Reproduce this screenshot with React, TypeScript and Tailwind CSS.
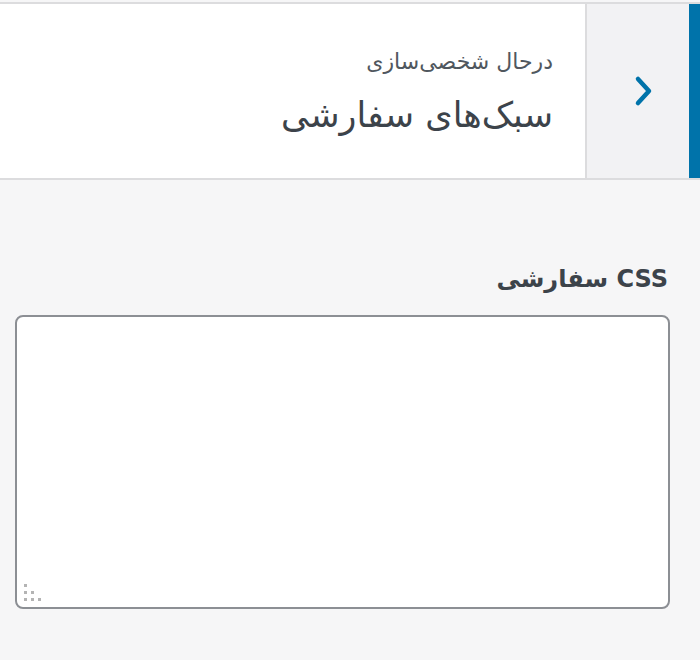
export default function App() {
  return (
    <div
      dir="rtl"
      className="w-[700px] h-[660px] bg-[#f6f6f7] pt-[2px]"
      style={{ fontFamily: '"DejaVu Sans", "Liberation Sans", sans-serif' }}
    >
      <div className="flex h-[178px] border-y-2 border-[#dcdcde] bg-white">
        <div className="w-[11px] shrink-0 bg-[#0073aa]" />
        <button className="flex w-[104px] shrink-0 items-center justify-center border-l-2 border-[#dcdcde] bg-[#f2f2f4] pl-[12px]">
          <svg width="20" height="32" viewBox="0 0 20 32" fill="none" className="text-[#0073aa]">
            <polyline points="4,4 15,16 4,28" stroke="currentColor" strokeWidth="4.5" strokeLinecap="round" strokeLinejoin="round" />
          </svg>
        </button>
        <div className="flex flex-1 flex-col pt-[44px] pr-[32px]">
          <span className="text-[22px] leading-[27px] text-[#50575e]">درحال شخصی‌سازی</span>
          <h3 className="mt-[19px] text-[35px] leading-[43px] text-[#3c434a]">سبک‌های سفارشی</h3>
        </div>
      </div>
      <div className="px-[30px] pt-[84px]">
        <label className="block pr-[2px] text-[24px] font-bold leading-[30px] text-[#3c434a]">CSS سفارشی</label>
      </div>
      <div className="pl-[15px] pr-[30px] pt-[21px]">
        <div className="relative">
          <textarea
            dir="ltr"
            className="block h-[294px] w-full resize-none rounded-[8px] border-2 border-[#8c8f94] bg-white"
          />
          <div dir="ltr" className="absolute bottom-[8px] left-[9px] flex flex-col items-start gap-[4px]">
            <div className="flex gap-[4px]">
              <span className="h-[3px] w-[3px] bg-[#b4b4b4]" />
            </div>
            <div className="flex gap-[4px]">
              <span className="h-[3px] w-[3px] bg-[#b4b4b4]" />
              <span className="h-[3px] w-[3px] bg-[#b4b4b4]" />
            </div>
            <div className="flex gap-[4px]">
              <span className="h-[3px] w-[3px] bg-[#b4b4b4]" />
              <span className="h-[3px] w-[3px] bg-[#b4b4b4]" />
              <span className="h-[3px] w-[3px] bg-[#b4b4b4]" />
            </div>
          </div>
        </div>
      </div>
    </div>
  )
}
